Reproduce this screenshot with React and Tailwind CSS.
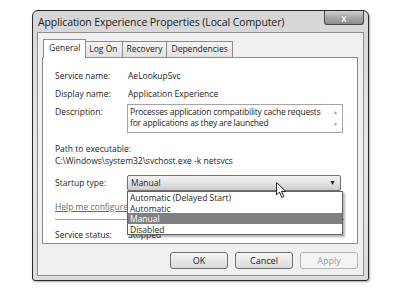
import React from "react";

function Btn({ children, disabled, className = "" }) {
  return (
    <div
      className={
        "w-[58px] h-[17px] rounded-[3px] border flex items-center justify-center text-[9px] " +
        (disabled
          ? "border-[#b5b5b5] bg-[#f4f4f4] text-[#9a9a9a] "
          : "border-[#707070] bg-gradient-to-b from-[#f6f6f6] to-[#d9d9d9] text-[#1e1e1e] ") +
        className
      }
    >
      {children}
    </div>
  );
}

function Tab({ children, active }) {
  return (
    <div
      className={
        "border border-b-0 border-[#8c8c8c] flex items-center px-[4px] text-[8.5px] text-[#1e1e1e] " +
        (active
          ? "h-[19px] bg-white -mr-px relative z-10 mb-[-1px] pb-[1px] px-[5px]"
          : "h-[16px] bg-gradient-to-b from-[#f4f4f4] to-[#e2e2e2] -ml-px first:ml-0")
      }
    >
      {children}
    </div>
  );
}

export default function App() {
  return (
    <div
      className="w-[400px] h-[288px] bg-white overflow-hidden relative"
      style={{ fontFamily: '"Open Sans", "Noto Sans", Arial, sans-serif' }}
    >
      <div className="pt-[10px] pl-[32px]">
        <div className="w-[337px] h-[271px] border border-[#2a2a2a] rounded-t-[6px] rounded-b-[3px] bg-gradient-to-b from-[#d6d6d6] via-[#e6e6e6] to-[#dcdcdc] flex flex-col shadow-[1px_1px_2px_rgba(0,0,0,0.35)]">
          {/* title bar */}
          <div className="h-[21px] flex items-start shrink-0">
            <div className="pl-[5px] pt-[4px] text-[10.5px] text-[#1a1a1a] tracking-[-0.1px]">
              Application Experience Properties (Local Computer)
            </div>
            <div className="ml-auto mr-[4px] w-[40px] h-[14px] rounded-b-[3px] border border-t-0 border-[#4a4a4a] bg-gradient-to-b from-[#cfcfcf] via-[#a9a9a9] to-[#8c8c8c] flex items-center justify-center">
              <span className="text-white text-[10px] font-bold leading-none [text-shadow:0_0_1px_#333]">x</span>
            </div>
          </div>
          {/* client */}
          <div className="mx-[4px] mb-[4px] flex-1 border border-[#8e8e8e] bg-[#f0f0f0] flex flex-col pl-[4px] pr-[5px] pt-[5px]">
            {/* tabs */}
            <div className="flex items-end h-[19px] pl-px">
              <Tab active>General</Tab>
              <Tab>Log On</Tab>
              <Tab>Recovery</Tab>
              <Tab>Dependencies</Tab>
            </div>
            {/* panel */}
            <div className="h-[187px] border border-[#8c8c8c] bg-white pl-[12px] pr-[13px] text-[8.5px] text-[#252525]">
              <div className="flex h-[14px] items-center mt-[11px]">
                <div className="w-[73px]">Service name:</div>
                <div>AeLookupSvc</div>
              </div>
              <div className="flex h-[14px] items-center mt-[4px]">
                <div className="w-[73px]">Display name:</div>
                <div>Application Experience</div>
              </div>
              <div className="flex mt-[3px]">
                <div className="w-[72px] pt-[2px]">Description:</div>
                <div className="w-[216px] h-[29px] border border-[#a5a5a5] flex">
                  <div className="flex-1 pl-[2px] pt-[1px] leading-[11px] tracking-[-0.2px] whitespace-nowrap overflow-hidden">
                    Processes application compatibility cache requests
                    <br />
                    for applications as they are launched
                  </div>
                  <div className="w-[13px] flex flex-col items-center justify-between py-[5px] text-[#9a9a9a] text-[5px] leading-none">
                    <span>▲</span>
                    <span>▼</span>
                  </div>
                </div>
              </div>
              <div className="mt-[9px] h-[14px] flex items-center">Path to executable:</div>
              <div className="h-[14px] flex items-center -mt-[2px]">C:\Windows\system32\svchost.exe -k netsvcs</div>
              <div className="flex mt-[7px] h-[16px] items-center">
                <div className="w-[72px]">Startup type:</div>
                <div className="relative">
                  <div className="w-[214px] h-[16px] border border-[#707070] rounded-[2px] bg-gradient-to-b from-[#f2f2f2] via-[#e4e4e4] to-[#cbcbcb] flex items-center pl-[3px] pr-[4px]">
                    <span>Manual</span>
                    <span className="ml-auto text-[7px] text-[#222]">▼</span>
                  </div>
                  <div className="absolute left-0 top-[16px] w-[216px] h-[44px] border border-[#646464] bg-white z-20 shadow-[2px_2px_2px_rgba(0,0,0,0.3)] leading-[11px]">
                    <div className="pl-[2px] h-[11px]">Automatic (Delayed Start)</div>
                    <div className="pl-[2px] h-[10px]">Automatic</div>
                    <div className="pl-[2px] h-[11px] bg-[#808080] text-white">Manual</div>
                    <div className="pl-[2px] h-[10px]">Disabled</div>
                  </div>
                </div>
              </div>
              <div className="mt-[9px] h-[14px] flex items-center text-[#6a6a6a] underline">
                Help me configure service startup options.
              </div>
              <div className="mt-[5px] h-px bg-[#a0a0a0]" />
              <div className="flex h-[14px] items-center mt-[8px]">
                <div className="w-[73px]">Service status:</div>
                <div>Stopped</div>
              </div>
            </div>
            {/* buttons */}
            <div className="flex justify-end gap-[7px] mt-[8px]">
              <Btn>OK</Btn>
              <Btn>Cancel</Btn>
              <Btn disabled>Apply</Btn>
            </div>
          </div>
        </div>
      </div>
      {/* mouse cursor */}
      <svg className="absolute left-[276px] top-[182px] z-30" width="11" height="17" viewBox="0 0 11 17">
        <path d="M0.5 0.5 L0.5 13 L3.5 10 L5.8 15.5 L7.8 14.6 L5.6 9.4 L9.8 9.4 Z" fill="#fff" stroke="#222" strokeWidth="1" strokeLinejoin="round" />
      </svg>
    </div>
  );
}
